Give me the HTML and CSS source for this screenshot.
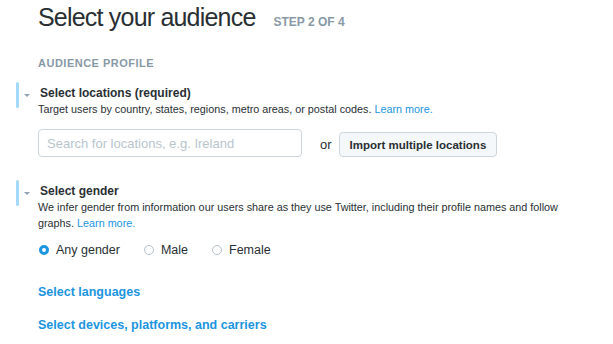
FILE: index.html
```html
<!DOCTYPE html>
<html lang="en">

<head>
    <meta charset="UTF-8">
    <meta name="viewport" content="width=device-width, initial-scale=1.0">
    <title>Select your audience</title>
    <link rel="stylesheet" href="styles.css">
</head>

<body>
    <div class="page">
        <div class="page-header">
            <h1>Select your audience</h1>
            <span class="step">STEP 2 OF 4</span>
        </div>

        <h2 class="section-label">AUDIENCE PROFILE</h2>

        <div class="field">
            <div class="field-bar"></div>
            <div class="caret"></div>
            <div class="field-body">
                <h3>Select locations (required)</h3>
                <p>Target users by country, states, regions, metro areas, or postal codes. <a href="#">Learn more.</a></p>
                <div class="location-row">
                    <input type="text" class="location-input" placeholder="Search for locations, e.g. Ireland">
                    <span class="or">or</span>
                    <button class="import-button">Import multiple locations</button>
                </div>
            </div>
        </div>

        <div class="field">
            <div class="field-bar"></div>
            <div class="caret"></div>
            <div class="field-body">
                <h3>Select gender</h3>
                <p>We infer gender from information our users share as they use Twitter, including their profile names and follow graphs. <a href="#">Learn more.</a></p>
                <div class="gender-options">
                    <label class="radio checked"><span class="radio-dot"></span>Any gender</label>
                    <label class="radio"><span class="radio-dot"></span>Male</label>
                    <label class="radio"><span class="radio-dot"></span>Female</label>
                </div>
            </div>
        </div>

        <a href="#" class="more-link">Select languages</a>
        <a href="#" class="more-link">Select devices, platforms, and carriers</a>
    </div>
</body>
</html>
```

FILE: styles.css
```css
body {
    font-family: 'Liberation Sans', Arial, sans-serif;
    margin: 0;
    padding: 0;
    background-color: #fff;
    color: #292f33;
}

.page {
    padding: 0 0 0 16px;
}

.page-header {
    display: flex;
    align-items: baseline;
    margin-left: 22px;
    height: 34px;
}

.page-header h1 {
    margin: 0;
    font-size: 25px;
    font-weight: normal;
    letter-spacing: -0.8px;
    line-height: 34px;
    color: #292f33;
}

.step {
    margin-left: 18px;
    font-size: 12px;
    font-weight: bold;
    color: #8899a6;
}

.section-label {
    margin: 22px 0 0 22px;
    font-size: 11px;
    font-weight: bold;
    letter-spacing: 0.5px;
    line-height: 14px;
    color: #8899a6;
}

.field {
    display: flex;
    margin-top: 12px;
}

.field + .field {
    margin-top: 23px;
}

.field-bar {
    width: 3px;
    height: 26px;
    border-radius: 2px;
    background-color: #a4d9f9;
    flex-shrink: 0;
}

.caret {
    width: 19px;
    flex-shrink: 0;
    position: relative;
}

.caret::after {
    content: '';
    position: absolute;
    left: 5px;
    top: 12px;
    border-left: 3px solid transparent;
    border-right: 3px solid transparent;
    border-top: 3px solid #8ea3b5;
}

.field-body {
    flex: 1;
    padding-right: 40px;
}

.field-body h3 {
    margin: 4px 0 0 2px;
    font-size: 12px;
    font-weight: bold;
    line-height: 15px;
    color: #292f33;
}

.field-body p {
    margin: 0;
    font-size: 10.8px;
    line-height: 16px;
    color: #292f33;
}

.field-body a {
    color: #1b95e0;
    text-decoration: none;
}

.location-row {
    display: flex;
    align-items: center;
    margin-top: 12px;
}

.location-input {
    width: 264px;
    height: 28px;
    box-sizing: border-box;
    padding: 0 8px;
    border: 1px solid #ccd6dd;
    border-radius: 4px;
    font-family: inherit;
    font-size: 13px;
    color: #292f33;
}

.location-input::placeholder {
    color: #b8c5ce;
}

.or {
    margin: 0 7px 0 18px;
    font-size: 13px;
    padding-top: 3px;
}

.import-button {
    height: 25px;
    padding: 0 10px;
    margin-top: 3px;
    border: 1px solid #ccd6dd;
    border-radius: 4px;
    background-color: #f5f8fa;
    font-family: inherit;
    font-size: 11.5px;
    font-weight: bold;
    color: #292f33;
}

.gender-options {
    display: flex;
    margin-top: 10px;
}

.radio {
    display: flex;
    align-items: center;
    margin-right: 23px;
    font-size: 12.5px;
    line-height: 18px;
}

.radio-dot {
    width: 10px;
    height: 10px;
    border: 1px solid #b4c1ca;
    border-radius: 50%;
    margin: 0 7px 0 1px;
    box-sizing: border-box;
}

.radio.checked .radio-dot {
    border: 3px solid #1b95e0;
}

.more-link {
    display: block;
    margin: 25px 0 0 22px;
    font-size: 12.5px;
    font-weight: bold;
    line-height: 16px;
    color: #1b95e0;
    text-decoration: none;
}

.more-link + .more-link {
    margin-top: 17px;
}
```
